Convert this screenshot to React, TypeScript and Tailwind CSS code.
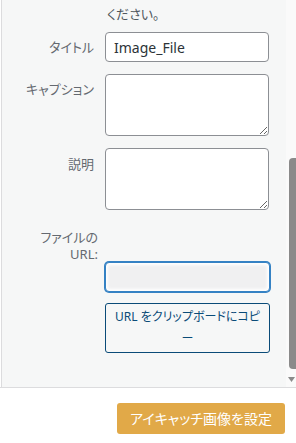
import React from "react";

const font = "font-['Noto_Sans','Noto_Sans_CJK_JP',sans-serif] [font-feature-settings:'palt']";

export default function App() {
  return (
    <div className={`w-[296px] h-[443px] bg-white overflow-hidden ${font}`}>
      <div className="flex h-[388px] border-b border-[#dcdcde]">
        <div className="w-[285px] ml-[1px] border-l border-[#dcdcde] bg-[#f6f7f7] flex flex-col">
          <p className="ml-[105px] mt-[4px] h-[20px] text-[13px] leading-[20px] text-[#50575e]">ください。</p>

          <div className="flex mt-[8px]">
            <label className="w-[92px] text-right text-[13px] leading-[30px] text-[#646970]">タイトル</label>
            <input
              readOnly
              defaultValue="Image_File"
              className="ml-[11px] w-[164px] h-[30px] rounded-[4px] border border-[#8c8f94] bg-white px-[8px] text-[14px] text-[#2c3338] outline-none"
            />
          </div>

          <div className="flex mt-[12px]">
            <label className="w-[92px] text-right text-[13px] leading-[20px] pt-[5px] text-[#646970]">キャプション</label>
            <textarea className="ml-[11px] w-[164px] h-[62px] rounded-[4px] border border-[#8c8f94] bg-white outline-none" />
          </div>

          <div className="flex mt-[12px]">
            <label className="w-[92px] text-right text-[13px] leading-[20px] pt-[6px] text-[#646970]">説明</label>
            <textarea className="ml-[11px] w-[164px] h-[62px] rounded-[4px] border border-[#8c8f94] bg-white outline-none" />
          </div>

          <label className="mt-[19px] w-[96px] h-[33px] text-right text-[13px] leading-[17px] text-[#646970]">
            ファイルの
            <br />
            URL:
          </label>
          <input
            readOnly
            className="ml-[103px] w-[165px] h-[30px] rounded-[4px] border border-[#3582c4] shadow-[0_0_0_1px_#3582c4,inset_0_0_3px_2px_#ffffff] bg-[#f0f0f1] outline-none"
          />
          <button className="mt-[11px] ml-[103px] w-[165px] h-[50px] rounded-[3px] border border-[#0a4b78] bg-[#f6f7f7] text-[12px] leading-[22px] text-[#0a4b78]">
            URL をクリップボードにコピ
            <br />ー
          </button>
        </div>
        <div className="flex-1 bg-[#fafafa] flex flex-col items-end">
          <div className="mt-[158px] w-[7px] h-[211px] rounded-l-[4px] bg-[#8a8a8a]" />
          <svg className="mt-[8px] mr-[1px]" width="7" height="5" viewBox="0 0 7 5">
            <path d="M0 0 L7 0 L3.5 5 Z" fill="#8a8a8a" />
          </svg>
        </div>
      </div>
      <div className="flex justify-end pr-[11px] pt-[15px]">
        <button className="w-[168px] h-[31px] rounded-[3px] bg-[#e1a948] text-white text-[14px] leading-[31px]">
          アイキャッチ画像を設定
        </button>
      </div>
    </div>
  );
}
